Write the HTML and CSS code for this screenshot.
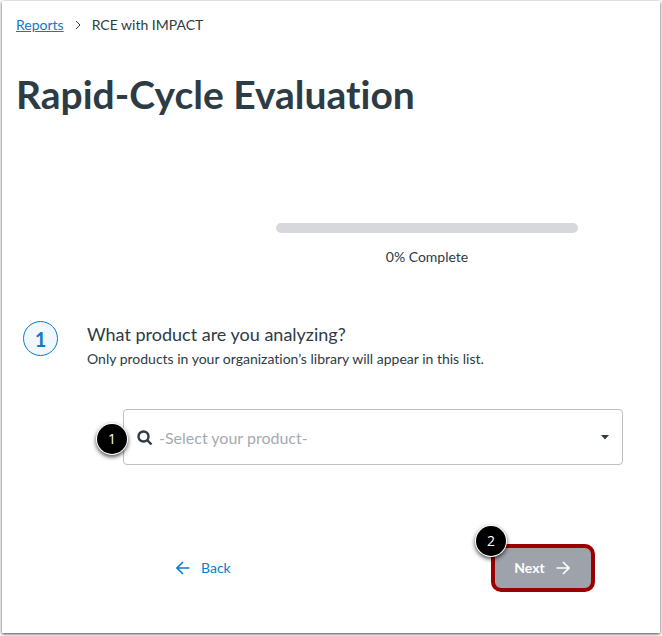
FILE: index.html
```html
<!DOCTYPE html>
<html lang="en">
<head>
<meta charset="utf-8">
<meta name="viewport" content="width=device-width, initial-scale=1">
<title>Rapid-Cycle Evaluation</title>
<link rel="stylesheet" href="styles.css">
</head>
<body>
<main class="page">
  <nav class="breadcrumb" aria-label="Breadcrumb">
    <a class="link" href="#reports">Reports</a>
    <svg class="chevron" viewBox="0 0 6 10" aria-hidden="true"><path d="M1 1l4 4-4 4"/></svg>
    <span>RCE with IMPACT</span>
  </nav>
  <h1 class="title">Rapid-Cycle Evaluation</h1>

  <section class="progress">
    <div class="track" role="progressbar" aria-valuenow="0" aria-valuemin="0" aria-valuemax="100" aria-labelledby="progress-text"></div>
    <p class="progress-text" id="progress-text">0% Complete</p>
  </section>

  <form class="step">
    <div class="step-head">
      <span class="step-number">1</span>
      <div class="step-copy">
        <label class="question" for="product">What product are you analyzing?</label>
        <p class="hint">Only products in your organization’s library will appear in this list.</p>
      </div>
    </div>

    <div class="field">
      <select class="select" id="product">
        <option>-Select your product-</option>
      </select>
      <svg class="search" viewBox="0 0 16 16" aria-hidden="true"><circle cx="6.5" cy="6.5" r="5"/><path d="M10.2 10.2l4.3 4.3"/></svg>
      <svg class="caret" viewBox="0 0 8 5" aria-hidden="true"><path d="M0 0h8L4 4.6z"/></svg>
      <span class="marker marker-field">1</span>
    </div>

    <div class="actions">
      <a class="back" href="#back">
        <svg class="arrow" viewBox="0 0 14 14" aria-hidden="true"><path d="M13.5 7H1M7 1L1 7l6 6"/></svg>
        Back
      </a>
      <div class="next-wrap">
        <button class="next" type="button">
          Next
          <svg class="arrow" viewBox="0 0 14 14" aria-hidden="true"><path d="M.5 7H13M7 1l6 6-6 6"/></svg>
        </button>
        <span class="marker marker-next">2</span>
      </div>
    </div>
  </form>
</main>
</body>
</html>
```
FILE: styles.css
```css
* {
  box-sizing: border-box;
}

body {
  margin: 0;
  padding: 1px 2px 3px;
  background: #fff;
  color: #2d3b45;
  font: 14px/20px Lato, "Liberation Sans", sans-serif;
  font-variant-ligatures: none;
}

h1,
p {
  margin: 0;
}

svg {
  flex: none;
  fill: none;
  stroke: currentColor;
}

.page {
  padding: 14px 14px 41px;
  background: #fff;
  box-shadow: 0 1px 3px rgba(0, 0, 0, 0.75);
}

.breadcrumb {
  display: flex;
  align-items: center;
  gap: 11px;
}

.link {
  color: #0b7bcb;
  text-decoration: underline;
}

.chevron {
  width: 6px;
  height: 10px;
}

.title {
  margin-top: 35px;
  font-size: 39px;
  line-height: 48px;
  font-weight: 700;
}

.progress {
  margin: 105px 68px 0 260px;
  text-align: center;
}

.track {
  height: 10px;
  border-radius: 5px;
  background: #d7d8dc;
}

.progress-text {
  margin-top: 14px;
}

.step {
  margin-top: 54px;
}

.step-head {
  display: flex;
  gap: 29px;
  padding-left: 7px;
}

.step-number {
  display: flex;
  align-items: center;
  justify-content: center;
  flex: none;
  width: 35px;
  height: 35px;
  border: 1px solid #0b7bcb;
  border-radius: 50%;
  background: #f2f7fc;
  color: #0b7bcb;
  font-size: 20px;
  font-weight: 700;
}

.question {
  display: block;
  margin-bottom: 2px;
  font-size: 18px;
  line-height: 26px;
}

.field {
  position: relative;
  margin: 40px 23px 0 107px;
}

.select {
  display: block;
  width: 100%;
  height: 56px;
  padding: 2px 35px 0;
  border: 1px solid #bcbebf;
  border-radius: 4px;
  appearance: none;
  background: #fff;
  color: #a5abb0;
  font: 16px/24px Lato, "Liberation Sans", sans-serif;
}

.search {
  position: absolute;
  top: 21px;
  left: 14px;
  width: 16px;
  height: 16px;
  stroke-width: 2.4;
}

.caret {
  position: absolute;
  top: 26px;
  right: 14px;
  width: 8px;
  height: 5px;
  fill: currentColor;
  stroke: none;
}

.marker {
  position: absolute;
  display: flex;
  align-items: center;
  justify-content: center;
  width: 30px;
  height: 30px;
  border-radius: 50%;
  background: #000;
  box-shadow: 0 0 0 1px #fff, 0 2px 4px 1px rgba(0, 0, 0, 0.7);
  color: #fff;
  font: 14px/20px "Open Sans", sans-serif;
}

.marker-field {
  top: 15px;
  left: -26px;
}

.marker-next {
  top: -18px;
  left: -15px;
}

.actions {
  display: flex;
  align-items: center;
  justify-content: space-between;
  margin: 79px 51px 0 160px;
}

.back {
  display: flex;
  align-items: center;
  gap: 11px;
  color: #0b7bcb;
  text-decoration: none;
}

.arrow {
  width: 14px;
  height: 14px;
  stroke-width: 1.6;
}

.next-wrap {
  position: relative;
}

.next {
  display: flex;
  align-items: center;
  justify-content: center;
  gap: 11px;
  width: 104px;
  height: 48px;
  padding: 0 2px 0 0;
  border: 4px solid #900;
  border-radius: 10px;
  background: #9ea2ab;
  color: #fff;
  font: 700 14px/20px Lato, "Liberation Sans", sans-serif;
}
```
